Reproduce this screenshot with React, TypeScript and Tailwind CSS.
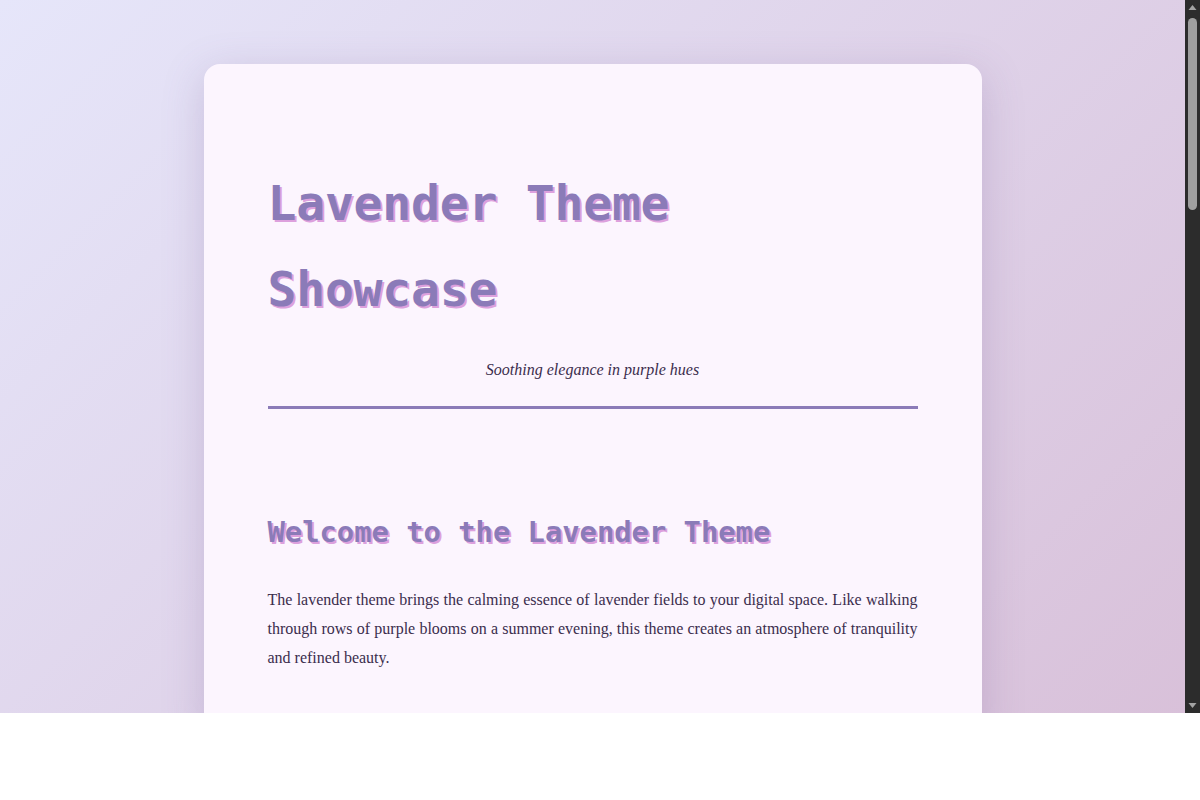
import React from "react";

const mono = "font-['DejaVu_Sans_Mono',monospace]";
const serif = "font-['Liberation_Serif',serif]";

function Section({ title, children }: { title: string; children: React.ReactNode }) {
  return (
    <section className="mt-[97px]">
      <h2
        className={`${mono} font-bold text-[28.8px] leading-[52px] text-[#8b7bb8] [text-shadow:2px_2px_0_#dda0dd]`}
      >
        {title}
      </h2>
      <div className="mt-[27px] flex flex-col gap-[28px]">{children}</div>
    </section>
  );
}

function P({ children }: { children: React.ReactNode }) {
  return <p className="text-justify text-[16px] leading-[29px] text-[#3b2d4d]">{children}</p>;
}

function Scrollbar() {
  return (
    <div className="relative h-full w-[15px] shrink-0 bg-[#2c2c2c]">
      <svg className="absolute left-0 top-0" width="15" height="15" viewBox="0 0 15 15">
        <path d="M3.5 10 L7.5 5 L11.5 10 Z" fill="#a3a3a3" />
      </svg>
      <div className="absolute left-[3px] top-[18px] h-[192px] w-[9px] rounded-full bg-[#9f9f9f]" />
      <svg className="absolute bottom-0 left-0" width="15" height="15" viewBox="0 0 15 15">
        <path d="M3.5 5 L7.5 10 L11.5 5 Z" fill="#a3a3a3" />
      </svg>
    </div>
  );
}

export default function App() {
  return (
    <div className="flex h-[713px] bg-white">
      <div className="min-w-0 flex-1 overflow-hidden">
        <div className={`${serif} min-h-full bg-[linear-gradient(135deg,#e6e6fa_0%,#d8bfd8_100%)] px-4 pt-16 pb-16`}>
          <main className="mx-auto w-[778px] rounded-2xl bg-[#fcf5fe] px-16 pt-16 pb-16 shadow-[0_10px_40px_rgba(120,90,150,0.25)]">
            <header className="border-b-[3px] border-[#8b7bb8] pt-[32px] pb-[21px]">
              <h1
                className={`${mono} text-[48px] font-bold leading-[86.4px] tracking-[-0.2px] text-[#8b7bb8] [text-shadow:2px_2px_0_#dda0dd]`}
              >
                Lavender Theme Showcase
              </h1>
              <p className="mt-[23px] text-center text-[16px] italic leading-[28.8px] text-[#3b2d4d]">
                Soothing elegance in purple hues
              </p>
            </header>

            <Section title="Welcome to the Lavender Theme">
              <P>
                The lavender theme brings the calming essence of lavender fields to your digital space. Like walking
                through rows of purple blooms on a summer evening, this theme creates an atmosphere of tranquility
                and refined beauty.
              </P>
            </Section>
          </main>
        </div>
      </div>
      <Scrollbar />
    </div>
  );
}
